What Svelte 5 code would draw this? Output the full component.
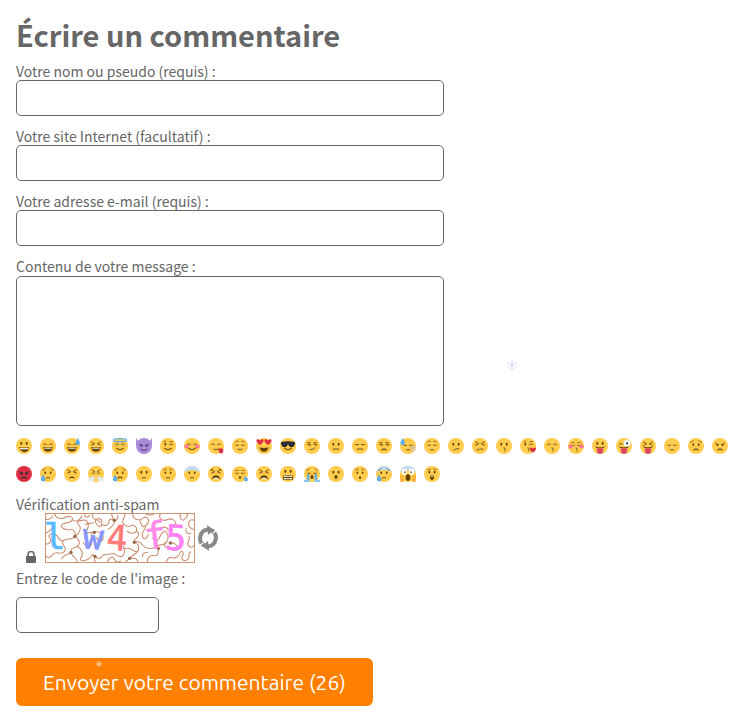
<script lang="ts">
	type Part = { d: string; fill?: string; stroke?: string; w?: number };

	const brown = '#664500';
	const line = (d: string, w = 2, stroke = brown): Part => ({ d, stroke, w });
	const shape = (d: string, fill = brown): Part => ({ d, fill });
	const oval = (x: number, y: number, rx: number, ry: number) =>
		`M${x - rx} ${y}a${rx} ${ry} 0 1 0 ${2 * rx} 0a${rx} ${ry} 0 1 0 ${-2 * rx} 0z`;
	const heart = (x: number, y: number, s: number) =>
		`M${x} ${y + s}C${x - 2 * s} ${y - s / 3} ${x - s} ${y - 1.6 * s} ${x} ${y - s / 2}C${x + s} ${y - 1.6 * s} ${x + 2 * s} ${y - s / 3} ${x} ${y + s}z`;
	const drop = (x: number, y: number) => `M${x} ${y}q-5 8-5 11a5 5 0 0 0 10 0q0-3-5-11z`;

	// every face is drawn on a 36 x 36 grid
	const parts: Record<string, Part[]> = {
		eyes: [shape(oval(12, 14, 2.2, 3.2) + oval(24, 14, 2.2, 3.2))],
		eyesHigh: [shape(oval(12, 12, 2.3, 3.8) + oval(24, 12, 2.3, 3.8))],
		eyesSmall: [shape(oval(12, 15, 2, 2.8) + oval(24, 15, 2, 2.8))],
		happy: [line('M8 15q4-5 7 0M21 15q3-5 7 0')],
		closed: [line('M8 16q3 3 7 0M21 16q4 3 7 0', 1.8)],
		squint: [line('M8 9l7 4-7 3M28 9l-7 4 7 3')],
		dash: [line('M8 15h7M21 15h7')],
		side: [line('M7 14h8M21 14h8', 1.8), shape(oval(13, 16, 1.8, 1.8) + oval(27, 16, 1.8, 1.8))],
		wink: [shape(oval(12, 14, 2.3, 3.2)), line('M21 15q4-4 8 0M22 9q3-3 6-1M9 8q2-2 4-1', 1.8)],
		frownEyes: [line('M8 12l7 3M28 12l-7 3'), shape(oval(12, 16, 2, 2.4) + oval(24, 16, 2, 2.4))],
		browsUp: [line('M6 10q4-1 6-4M30 10q-4-1-6-4', 1.6)],
		browsRound: [line('M8 9q3-4 6-2M22 7q4-2 6 2', 1.6)],
		browsFlat: [line('M8 10h6M22 10h6', 1.5)],
		hearts: [shape(heart(9, 9, 7) + heart(27, 9, 7), '#dd2e44')],
		glasses: [shape('M2 9q16-3 32 0v3q-2 9-8 9-6 0-8-8-2 8-8 8-6 0-8-9z', '#292f33')],
		grin: [shape('M7 20q11 3 22 0-1 12-11 12S8 28 7 20z'), shape('M9 22q9 2 18 0v3q-9 2-18 0z', '#fff')],
		laugh: [shape('M7 20q11 2 22 0-2 11-11 11T7 20z'), shape('M10 22h16v2H10z', '#fff')],
		open: [shape('M8 21q10 3 20 0-1 10-10 10T8 21z')],
		smile: [line('M10 23q8 7 16 0', 2.3)],
		softSmile: [line('M13 25q5 3 10 0')],
		smirk: [line('M14 26q7 1 11-4')],
		flat: [line('M12 25h12', 2.2)],
		sad: [line('M13 27q5-4 10 0', 2.3)],
		smallSad: [line('M14 27q4-3 8 0')],
		slant: [line('M13 27q4-3 11-3')],
		zigzag: [line('M11 28l3-4 3 3 3-3 3 3 2-3', 1.8)],
		kiss: [line('M18 22q5 1 1 3.500 5 1 0 4', 1.7)],
		oh: [shape(oval(18, 25, 3.5, 4.5))],
		smallOh: [shape(oval(18, 26, 2.6, 3.2))],
		astonished: [shape(oval(18, 26, 4.5, 5.5)), shape('M15 22h6v2h-6z', '#fff')],
		wail: [shape('M9 30q1-9 9-9t9 9q-9-4-18 0z'), shape('M12 28q6-4 12 0v2q-6-3-12 0z', '#fff')],
		teeth: [shape('M7 21h22v10H7z'), shape('M9 22h18v3H9zM9 27h18v3H9z', '#fff'), line('M14 21v10M18 21v10M22 21v10', 1)],
		tongue: [line('M9 20q9 4 18 0', 2.5), shape('M11 23h14v7q-1 6-7 6t-7-6z', '#dd5069'), line('M18 25v6', 1.5, '#be1931')],
		lick: [shape('M23 25q6-4 11 0 2 9-4 10-6 0-7-10z', '#dd2e44')],
		cheeks: [shape(oval(6, 19, 5.5, 4.5) + oval(30, 19, 5.5, 4.5), '#ff7892')],
		kissHeart: [shape(heart(29, 27, 6), '#dd2e44')],
		sweatRight: [shape(drop(31, 0), '#5dadec')],
		sweatLeft: [shape(drop(6, 0), '#5dadec')],
		tearLeft: [shape(drop(7, 19), '#5dadec')],
		tearRight: [shape('M26 24q9 0 10 6 0 5-5 5-4-1-3-5-1-3-2-6z', '#5dadec')],
		streams: [shape('M7 18h5v16H7zM24 18h5v16h-5z', '#5dadec'), shape('M0 31h12v5H0zM24 31h12v5H24z', '#87c5f5')],
		halo: [line(oval(18, 5, 15, 3.5), 3, '#5dadec')],
		chill: [shape('M1 15Q2 1 18 0q16 1 17 15-6-6-17-6T1 15z', '#bdddf4')],
		horns: [shape('M1 0q1 8 9 8L2 19Q-3 8 1 0zM35 0q-1 8-9 8l8 11q5-11 1-19z', '#aa8dd8')],
		impFace: [
			line('M8 14l7 3M28 14l-7 3M11 25q7 6 14 0', 2.5, '#553788'),
			shape(oval(12, 18, 2.3, 2.3) + oval(24, 18, 2.3, 2.3), '#553788')
		],
		rageFace: [
			line('M8 13l7 4M28 13l-7 4M12 28q6-6 12 0', 2.5, '#292f33'),
			shape(oval(12, 18, 2.4, 2.4) + oval(24, 18, 2.4, 2.4), '#292f33')
		],
		nostrils: [line('M9 9l6 4M27 9l-6 4M9 16q3 2 6 0M21 16q3 2 6 0', 1.8)],
		steam: [shape('M16 24l-2 11q-5 2-8-1-5 1-6-3 0-4 5-5 3-3 11-2zM20 24l2 11q5 2 8-1 5 1 6-3 0-4-5-5-3-3-11-2z', '#e6e7e8')],
		zany: [
			line('M7 14q4-4 8 0'),
			shape(oval(25, 12, 8, 8), '#e1e8ed'),
			shape(oval(25, 12, 6.5, 6.5), '#fff'),
			shape(oval(25, 12, 2.5, 2.5), '#292f33')
		],
		scared: [
			shape(oval(10, 13, 6, 7) + oval(26, 13, 6, 7), '#fff'),
			shape(oval(11, 14, 1.7, 2) + oval(25, 14, 1.7, 2) + oval(18, 26, 5.5, 7.5)),
			shape('M0 20l5 2q5 6 3 14H1zM36 20l-5 2q-5 6-3 14h7z', '#ffac33')
		],
		flake: [line('M30 16v14M24 19l12 8M24 27l12-8', 2, '#c7bfc3')]
	};

	const rows = [
		'eyesHigh grin|happy laugh|happy laugh sweatRight|squint laugh|happy smile halo|horns impFace|wink smile|happy cheeks smile|happy softSmile lick|browsRound closed softSmile|hearts open|glasses smile|side browsFlat smirk|eyes flat|dash flat|side browsFlat sad|closed smallSad sweatLeft flake|browsRound closed smallSad|eyes slant|squint zigzag|eyes kiss|wink kiss kissHeart|happy kiss|closed browsFlat cheeks kiss|eyesHigh tongue|zany tongue|squint tongue|closed smallSad|browsUp eyesSmall sad|frownEyes sad',
		'rageFace|browsUp eyesSmall smallSad tearLeft|squint sad|nostrils steam|browsUp eyesSmall sad tearLeft|eyes smallSad|browsRound eyesSmall smallSad|chill eyesSmall smallSad|browsUp squint wail|closed browsFlat smallOh tearRight|squint wail|eyesHigh teeth|closed browsUp streams oh|eyes oh|browsRound eyesSmall smallOh|chill browsUp eyesSmall smallSad tearLeft|chill scared|browsRound eyes astonished'
	];
	const names =
		'smiley,smile,sweat_smile,laughing,innocent,smiling_imp,wink,blush,yum,relieved,heart_eyes,sunglasses,smirk,neutral_face,expressionless,unamused,sweat,pensive,confused,confounded,kissing,kissing_heart,kissing_smiling_eyes,kissing_closed_eyes,stuck_out_tongue,stuck_out_tongue_winking_eye,stuck_out_tongue_closed_eyes,disappointed,worried,angry,rage,cry,persevere,triumph,disappointed_relieved,frowning,anguished,fearful,weary,sleepy,tired_face,grimacing,sob,open_mouth,hushed,cold_sweat,scream,astonished'.split(',');
	const skins: Record<string, string> = { smiling_imp: '#aa8dd8', rage: '#dd2e44' };
	const emojis = rows
		.join('|')
		.split('|')
		.map((keys, i) => ({
			name: names[i],
			skin: skins[names[i]] ?? '#ffcc4d',
			parts: keys.split(' ').flatMap((key) => parts[key])
		}));

	const squiggles = [
		'M28 0C30 14 44 20 58 14S84 8 82 20 62 26 52 34 60 52 74 50 92 58 90 70',
		'M82 20C96 30 104 20 112 8M90 70C104 60 112 44 100 34S112 20 124 22',
		'M90 70C80 84 62 72 54 84S70 104 58 116 34 112 24 124 8 136 2 128',
		'M90 70C104 80 108 92 96 100S76 104 78 118 96 130 98 150M78 118C68 128 54 124 50 138',
		'M0 92C14 96 22 84 14 74S24 58 34 66 40 84 54 84M0 58C8 62 16 52 22 44',
		'M96 100C112 108 116 124 108 134S118 146 130 138 140 118 150 130 170 136 176 124',
		'M120 0C116 14 130 16 134 6M124 22C134 34 130 48 122 54S128 60 142 58',
		'M142 0C140 14 148 22 158 18S172 22 170 34 156 40 152 28 162 20 166 30',
		'M170 34C180 42 192 36 192 26S206 18 208 22 222 18 218 6M208 22C210 36 198 44 188 50',
		'M142 58C160 52 176 62 174 76S158 86 154 72M142 58C132 72 144 82 138 96S120 98 114 88',
		'M176 124C188 130 200 118 208 122S224 134 232 130 240 110 236 100',
		'M186 150C190 134 202 126 208 138S220 148 228 144M150 130C146 140 152 146 150 150',
		'M240 0C242 12 230 20 234 30S250 42 258 38 278 42 274 54 252 60 246 54',
		'M264 0C260 14 274 22 284 20S298 8 306 14 312 30 302 38 288 36 284 20',
		'M300 0C304 6 318 8 326 4M348 0C340 8 344 20 356 22S372 12 384 20 394 32 388 42',
		'M274 54C284 58 282 70 274 76S262 90 268 88 286 100 280 112 262 106 250 106 236 110 236 100',
		'M268 88C278 82 288 88 292 96M302 38C302 54 288 54 292 70S308 76 310 62',
		'M292 96C302 108 322 110 336 100S356 100 364 88 372 68 364 58 348 64 342 76 330 84 322 74',
		'M280 112C276 124 262 124 256 134S240 140 242 150M256 134C268 138 276 132 280 150',
		'M310 150C302 140 312 126 326 128S342 118 338 106M310 118C300 118 292 122 292 132',
		'M376 90C386 88 396 94 398 104S380 110 368 106 356 90 364 88M350 44C358 40 370 44 370 54',
		'M366 150C362 142 372 130 382 134S402 128 406 118 418 120 412 130 418 146 428 140 424 122 438 116',
		'M408 0C400 12 410 26 418 20S430 6 424 0M450 24C436 12 426 30 434 42S450 46 450 52',
		'M432 68C438 82 422 90 430 98S444 104 450 92M438 60C430 66 420 58 424 46',
		'M148 28C140 34 126 28 120 36M0 18C10 22 20 16 24 8M200 0C198 10 206 14 208 22'
	];
	const knots = [[90, 70], [208, 22], [78, 118], [148, 58], [376, 90], [254, 136], [340, 106], [268, 88], [150, 130]];
	const letters = [
		{ char: 'l', x: -4, y: 108, size: 108, color: '#5abaff', turn: 0 },
		{ char: 'w', x: 113, y: 108, size: 104, color: '#8796ff', turn: 5 },
		{ char: '4', x: 185, y: 111, size: 104, color: '#ff7b7b', turn: 3 },
		{ char: 'f', x: 298, y: 106, size: 110, color: '#ff8be9', turn: -7 },
		{ char: '5', x: 361, y: 111, size: 104, color: '#ff82f3', turn: 3 }
	];

	let message = $state('');

	function addEmoji(name: string) {
		message += ` :${name}: `;
	}
</script>

<main>
	<h1>Écrire un commentaire</h1>
	<form onsubmit={(e) => e.preventDefault()}>
		<div class="field">
			<label for="name">Votre nom ou pseudo (requis) :</label>
			<input id="name" type="text" />
		</div>
		<div class="field">
			<label for="site">Votre site Internet (facultatif) :</label>
			<input id="site" type="url" />
		</div>
		<div class="field">
			<label for="mail">Votre adresse e-mail (requis) :</label>
			<input id="mail" type="email" />
		</div>
		<div class="field message">
			<label for="content">Contenu de votre message :</label>
			<textarea id="content" bind:value={message}></textarea>
		</div>

		<div class="emojis">
			{#each emojis as emoji}
				<button type="button" class="emoji" aria-label={emoji.name} onclick={() => addEmoji(emoji.name)}>
					<svg viewBox="0 0 36 36">
						<circle cx="18" cy="18" r="18" fill={emoji.skin} />
						{#each emoji.parts as part}
							<path d={part.d} fill={part.fill ?? 'none'} stroke={part.stroke ?? 'none'} stroke-width={part.w} stroke-linecap="round" />
						{/each}
					</svg>
				</button>
			{/each}
		</div>

		<label for="code">Vérification anti-spam</label>
		<div class="captcha">
			<svg class="lock" viewBox="0 0 10 12" aria-hidden="true">
				<path d="M2 6V3.5a3 3 0 0 1 6 0V6" fill="none" stroke="#666" stroke-width="1.6" />
				<rect y="5" width="10" height="7" rx="1" fill="#666" />
			</svg>
			<svg class="code-image" viewBox="0 0 450 150">
				<rect x="1.5" y="1.5" width="447" height="147" fill="#fff" stroke="#cb9475" stroke-width="3" />
				<g fill="none" stroke="#c98f70" stroke-width="3.2">
					{#each squiggles as d}
						<path {d} />
					{/each}
				</g>
				{#each knots as [x, y]}
					<circle cx={x} cy={y} r="5" fill="#98674b" />
				{/each}
				{#each letters as l}
					<text x={l.x} y={l.y} font-size={l.size} fill={l.color} stroke={l.color} stroke-width="2" transform="rotate({l.turn} {l.x + 30} 75)">{l.char}</text>
				{/each}
			</svg>
			<button type="button" class="reload" aria-label="Recharger">
				<svg viewBox="0 0 22 26">
					<path d="M7.500 20.800A8.700 8.700 0 0 1 11 4.600M14.500 5.200A8.700 8.700 0 0 1 11 21.400" fill="none" stroke="#888" stroke-width="4" />
					<path d="M10 0l7 5-6 5zM12 26l-7-5 6-5z" fill="#888" />
					<path d="M2 21l4-3M16 8l4-3" stroke="#fff" stroke-width="1.500" />
				</svg>
			</button>
		</div>
		<label for="code">Entrez le code de l'image :</label>
		<input id="code" class="code" type="text" />
		<button type="submit" class="send">Envoyer votre commentaire (26)</button>
	</form>

	<svg class="snow violet" viewBox="0 0 10 10" aria-hidden="true">
		<path d="M5 0v10M0 2.500l10 5M0 7.500l10-5M3.500 1L5 2.500 6.500 1M3.500 9L5 7.500 6.500 9" />
	</svg>
	<svg class="snow white" viewBox="0 0 10 10" aria-hidden="true">
		<path d="M5 0v10M0 2.500l10 5M0 7.500l10-5" />
	</svg>
</main>

<style>
	:global(body) {
		margin: 0;
		background: #fff;
	}
	main {
		position: relative;
		padding: 14px 8px 7px 16px;
		color: #666;
		font-family: 'Source Sans Pro', 'Noto Sans CJK SC', sans-serif;
		font-size: 14px;
		line-height: 18px;
	}
	h1 {
		margin: 0 0 8px;
		font-size: 29px;
		line-height: 40px;
		font-weight: 700;
	}
	label {
		display: block;
	}
	.field {
		max-width: 428px;
		margin-bottom: 11px;
	}
	input,
	textarea {
		display: block;
		box-sizing: border-box;
		width: 100%;
		height: 36px;
		padding: 4px 8px;
		border: 1px solid #666;
		border-radius: 5px;
		background: #fff;
		color: inherit;
		font: inherit;
	}
	.message {
		margin-bottom: 12px;
	}
	.message label {
		padding-bottom: 1px;
	}
	textarea {
		height: 150px;
		resize: none;
	}
	button {
		padding: 0;
		border: 0;
		background: none;
		cursor: pointer;
	}
	svg {
		display: block;
	}
	.emojis {
		display: flex;
		flex-wrap: wrap;
		gap: 12px 8px;
		margin-bottom: 13px;
	}
	.emoji,
	.emoji svg {
		width: 16px;
		height: 16px;
	}
	.captcha {
		display: flex;
		align-items: flex-end;
		padding-left: 10px;
		margin-bottom: 6px;
	}
	.lock {
		width: 10px;
		height: 12px;
		margin-right: 9px;
	}
	.code-image {
		width: 150px;
		height: 50px;
		font-family: 'DejaVu Sans Mono', monospace;
	}
	.reload {
		align-self: center;
		margin-left: 2px;
	}
	.reload svg {
		width: 22px;
		height: 26px;
	}
	.code {
		width: 143px;
		margin: 10px 0 25px;
	}
	.send {
		height: 48px;
		padding: 0 27px;
		border-radius: 6px;
		background: #ff8000;
		color: #fff;
		font-family: Ubuntu, 'Noto Sans', sans-serif;
		font-size: 21px;
	}
	.snow {
		position: absolute;
		fill: none;
		pointer-events: none;
	}
	.violet {
		top: 360px;
		left: 507px;
		width: 10px;
		stroke: #ddddff;
	}
	.white {
		top: 661px;
		left: 96px;
		width: 6px;
		stroke: #fff;
	}
</style>
